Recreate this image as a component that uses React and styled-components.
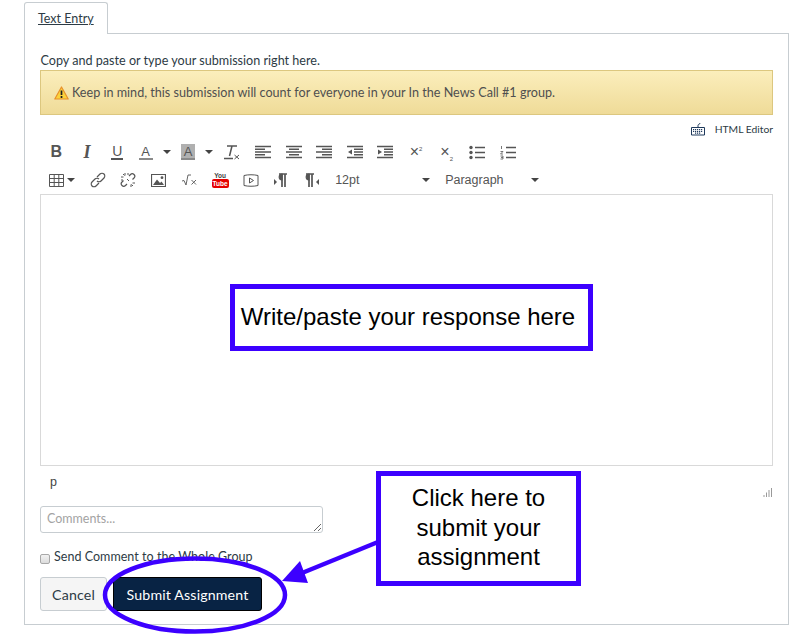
import React from 'react'
import styled, { createGlobalStyle } from 'styled-components'

const Global = createGlobalStyle`
  html, body { margin: 0; padding: 0; background: #fff; }
  body { font-family: Lato, "Liberation Sans", sans-serif; color: #2d3b45; font-size: 13px; }
`

const Page = styled.div`
  position: relative;
  width: 811px;
  height: 642px;
  overflow: hidden;
  padding: 2px 0 0 24px;
  box-sizing: border-box;
`

const Tab = styled.div`
  position: relative;
  z-index: 1;
  width: 84px;
  height: 32px;
  margin-bottom: -1px;
  box-sizing: border-box;
  padding: 7px 0 0 13px;
  background: #fff;
  border: 1px solid #c7cdd1;
  border-bottom: none;
  border-radius: 3px 3px 0 0;
  font-size: 12.5px;
  line-height: 17px;
  color: #2d3b45;
  span { text-decoration: underline; }
`

const Panel = styled.div`
  width: 765px;
  height: 592px;
  box-sizing: border-box;
  padding: 18px 15px 0;
  border: 1px solid #c7cdd1;
`

const Intro = styled.div`
  height: 18px;
  line-height: 17px;
  font-size: 12.6px;
  padding-left: 0.5px;
`

const Alert = styled.div`
  display: flex;
  align-items: center;
  gap: 3px;
  height: 45px;
  box-sizing: border-box;
  padding-left: 13px;
  background: linear-gradient(#fbeebc, #efdb98);
  border: 1px solid #dcc77f;
  color: #4f4f4f;
  font-size: 12.6px;
`

const EditorLink = styled.div`
  display: flex;
  justify-content: flex-end;
  align-items: center;
  gap: 9px;
  height: 18px;
  margin-top: 5px;
  font-size: 10.3px;
  color: #2d3b45;
`

const ToolRow = styled.div`
  display: flex;
  align-items: center;
  height: 28px;
  padding-left: 1px;
  color: #555;
`

const Tool = styled.span`
  display: flex;
  justify-content: center;
  align-items: center;
  flex: none;
  width: ${p => p.$w || 30.6}px;
  height: 24px;
`

const Letter = styled.span`
  font-family: ${p => (p.$serif ? '"Liberation Serif", serif' : '"Liberation Sans", sans-serif')};
  font-size: ${p => p.$size || 15}px;
  font-weight: ${p => (p.$bold ? 700 : 400)};
  font-style: ${p => (p.$italic ? 'italic' : 'normal')};
  line-height: 1;
  color: #555;
`

const Underlined = styled(Letter)`
  display: block;
  line-height: 12px;
  padding: 0 1px 1px;
  border-bottom: 2px solid #555;
`

const ColorLetter = styled.span`
  display: block;
  width: 14px;
  height: 16px;
  box-sizing: border-box;
  text-align: center;
  font-family: "Liberation Sans", sans-serif;
  font-size: 13px;
  line-height: 15px;
  color: #555;
  background: ${p => (p.$filled ? '#b0b0b0' : 'transparent')};
  border-bottom: 2px solid #8a8a8a;
`

const Script = styled.span`
  font-family: "Liberation Sans", sans-serif;
  font-size: 16px;
  color: #555;
  sup, sub { font-size: 6px; line-height: 0; }
`

const Caret = styled.i`
  display: block;
  flex: none;
  width: 0;
  height: 0;
  border-left: 4px solid transparent;
  border-right: 4px solid transparent;
  border-top: 4px solid #444;
`

const CaretSpace = styled.span`
  flex: none;
  width: ${p => p.$w}px;
`

const SelectLabel = styled.span`
  flex: none;
  width: ${p => p.$w}px;
  font-family: "Liberation Sans", sans-serif;
  font-size: 12.5px;
  color: #555;
`

const YouTube = styled.span`
  display: flex;
  flex-direction: column;
  align-items: center;
  font-family: "Liberation Sans", sans-serif;
  font-weight: 700;
  line-height: 1;
  b { font-size: 6.5px; line-height: 7px; color: #444; }
  em {
    font-style: normal;
    font-size: 6.5px;
    line-height: 9px;
    padding: 0 1px;
    color: #fff;
    background: #e60000;
    border-radius: 2px;
  }
`

const EditorBox = styled.div`
  height: 272px;
  box-sizing: border-box;
  border: 1px solid #d9d9d9;
`

const StatusBar = styled.div`
  display: flex;
  justify-content: space-between;
  height: 40px;
  padding-left: 10px;
  font-family: "Liberation Sans", sans-serif;
  font-size: 12.5px;
  line-height: 33px;
  color: #444;
  svg { margin-top: 22px; }
`

const Comments = styled.textarea`
  display: block;
  width: 283px;
  height: 27px;
  margin: 0;
  padding: 4px 6px;
  box-sizing: border-box;
  font-family: Lato, sans-serif;
  font-size: 12.5px;
  border: 1px solid #c7cdd1;
  border-radius: 3px;
  &::placeholder { color: #a3a3a3; opacity: 1; }
`

const CheckRow = styled.label`
  display: flex;
  align-items: flex-start;
  gap: 4px;
  height: 18px;
  margin-top: 14px;
  line-height: 20px;
  font-size: 12.5px;
  letter-spacing: 0.003em;
`

const Check = styled.input`
  appearance: none;
  width: 10px;
  height: 10px;
  margin: 7px 0 0;
  box-sizing: border-box;
  background: linear-gradient(#f2f2f2, #dcdcdc);
  border: 1px solid #a8a8a8;
  border-radius: 2px;
`

const Actions = styled.div`
  display: flex;
  gap: 6px;
  margin-top: 12px;
`

const Button = styled.button`
  height: 34px;
  width: ${p => p.$w}px;
  padding: 0;
  box-sizing: border-box;
  font-family: Lato, sans-serif;
  font-size: 14.2px;
  letter-spacing: 0.01em;
  border-radius: 3px;
  border: 1px solid ${p => (p.$primary ? '#000' : '#c7cdd1')};
  background: ${p => (p.$primary ? '#082344' : '#f5f5f5')};
  color: ${p => (p.$primary ? '#fff' : '#2d3b45')};
`

const Callout = styled.div`
  position: absolute;
  z-index: 3;
  left: ${p => p.$left}px;
  top: ${p => p.$top}px;
  width: ${p => p.$width}px;
  height: ${p => p.$height}px;
  box-sizing: border-box;
  padding: 0 ${p => p.$nudge || 0}px 2px 0;
  display: flex;
  align-items: center;
  justify-content: center;
  text-align: center;
  background: #fff;
  border: 5px solid #3c00ff;
  font-family: "Liberation Sans", sans-serif;
  font-size: 24px;
  line-height: 29.5px;
  color: #000;
`

const Markup = styled.svg`
  position: absolute;
  z-index: 2;
  left: 0;
  top: 0;
  pointer-events: none;
`

const Ic = ({ w = 16, h = 16, vb, children }) => (
  <svg width={w} height={h} viewBox={vb || `0 0 ${w} ${h}`} fill="none" stroke="#555" strokeWidth="1.2">
    {children}
  </svg>
)

const Lines = ({ rows }) => (
  <Ic w={16} h={14}>
    {rows.map(([x1, x2], i) => (
      <path key={i} d={`M${x1} ${1.5 + i * 2.75}H${x2}`} strokeWidth="1.5" />
    ))}
  </Ic>
)

const Indent = ({ flip }) => (
  <Ic w={16} h={14}>
    <path d="M0 1.5H16M0 12.5H16M7 4.25H16M7 7H16M7 9.75H16" strokeWidth="1.5" />
    <path d={flip ? 'M1 4.5L5 7L1 9.5Z' : 'M5 4.5L1 7L5 9.5Z'} fill="#555" stroke="none" />
  </Ic>
)

const List = ({ numbered }) => (
  <Ic w={16} h={15}>
    <path d="M6 2.5H16M6 7.5H16M6 12.5H16" strokeWidth="1.6" />
    {numbered
      ? <path d="M1.5 1V4M.5 6.5H3L.5 9H3M.5 11H3V14H.5M1 12.5H3" strokeWidth=".8" />
      : <g fill="#555" stroke="none"><circle cx="2" cy="2.5" r="1.7" /><circle cx="2" cy="7.5" r="1.7" /><circle cx="2" cy="12.5" r="1.7" /></g>}
  </Ic>
)

const Pilcrow = ({ left }) => (
  <Ic w={14} h={16}>
    {left
      ? <>
          <path d="M5 2H13M8 2V15M11 2V15" strokeWidth="1.7" />
          <path d="M8 2.2C4.5 2.2 4 8 8 8Z" fill="#555" />
          <path d="M0 7L3 10L0 13Z" fill="#555" stroke="none" />
        </>
      : <>
          <path d="M1 2H9M4 2V15M7 2V15" strokeWidth="1.7" />
          <path d="M4 2.2C.5 2.2 0 8 4 8Z" fill="#555" />
          <path d="M14 7L11 10L14 13Z" fill="#555" stroke="none" />
        </>}
  </Ic>
)

export default function App() {
  return (
    <Page>
      <Global />
      <Tab><span>Text Entry</span></Tab>
      <Panel>
        <Intro>Copy and paste or type your submission right here.</Intro>
        <Alert>
          <svg width="15" height="14" viewBox="0 0 15 14">
            <path d="M7.5 1L14.2 13H.8Z" fill="#fbd33c" stroke="#e8902a" strokeWidth="1.2" strokeLinejoin="round" />
            <path d="M7.5 4.5V9M7.5 10V12" stroke="#222" strokeWidth="1.7" />
          </svg>
          Keep in mind, this submission will count for everyone in your In the News Call #1 group.
        </Alert>
        <EditorLink>
          <svg width="16" height="14" viewBox="0 0 16 14" fill="none" stroke="#1f3a5c" strokeWidth="1">
            <path d="M1.5 5.5H14.5V13H1.5ZM8 5.5V3.5C8 2 10 2.5 10 1" />
            <path d="M3 7.5H13M3 9.3H13M5 11.2H11" strokeDasharray="1.2 .8" strokeWidth="1.2" />
          </svg>
          HTML Editor
        </EditorLink>

        <ToolRow>
          <Tool><Letter $bold $size={16}>B</Letter></Tool>
          <Tool><Letter $italic $bold $serif $size={18}>I</Letter></Tool>
          <Tool $w={30}><Underlined $size={14}>U</Underlined></Tool>
          <Tool $w={27}><ColorLetter>A</ColorLetter></Tool>
          <Tool $w={16}><Caret /></Tool>
          <Tool $w={26}><ColorLetter $filled>A</ColorLetter></Tool>
          <Tool $w={16}><Caret /></Tool>
          <Tool>
            <Ic w={16} h={16}>
              <path d="M3 2H13M8 2L5.5 12M0 14.5H9" strokeWidth="1.5" />
              <path d="M10.5 11L15 15M15 11L10.5 15" strokeWidth="1" />
            </Ic>
          </Tool>
          <Tool><Lines rows={[[0, 16], [0, 10], [0, 16], [0, 10], [0, 16]]} /></Tool>
          <Tool><Lines rows={[[0, 16], [3, 13], [0, 16], [3, 13], [0, 16]]} /></Tool>
          <Tool><Lines rows={[[0, 16], [6, 16], [0, 16], [6, 16], [0, 16]]} /></Tool>
          <Tool><Indent /></Tool>
          <Tool><Indent flip /></Tool>
          <Tool><Script>×<sup>2</sup></Script></Tool>
          <Tool><Script>×<sub>2</sub></Script></Tool>
          <Tool><List /></Tool>
          <Tool><List numbered /></Tool>
        </ToolRow>

        <ToolRow>
          <Tool $w={42}>
            <Ic w={15} h={13} vb="0 0 15 13">
              <path d="M.5.5H14.5V12.5H.5ZM.5 4.5H14.5M.5 8.5H14.5M5.2.5V12.5M9.8.5V12.5" strokeWidth="1" />
            </Ic>
            <CaretSpace $w={3} />
            <Caret />
          </Tool>
          <Tool $w={30}>
            <Ic w={16} h={16}>
              <path d="M7 5L10 2C11 1 13 1 14 2C15 3 15 5 14 6L11 9C10 10 8 10 7 9M9 11L6 14C5 15 3 15 2 14C1 13 1 11 2 10L5 7C6 6 8 6 9 7" />
            </Ic>
          </Tool>
          <Tool>
            <Ic w={16} h={16}>
              <path d="M9 4L10.5 2.5C11.5 1.5 13 1.5 14 2.5C15 3.5 15 5 14 6L12.5 7.5M7 12L5.5 13.5C4.5 14.5 3 14.5 2 13.5C1 12.5 1 11 2 10L3.5 8.5" />
              <path d="M5 1V3.5M1 5H3.5M11 15V12.5M15 11H12.5M8 1V3M1 8H3M3 2L4.5 3.5M13 14L11.5 12.5M7 7L9 9" strokeWidth="1" />
            </Ic>
          </Tool>
          <Tool>
            <Ic w={15} h={13} vb="0 0 15 13">
              <path d="M.5.5H14.5V12.5H.5Z" />
              <path d="M2 11L6 5.5L9 9L10.5 7.5L13 11Z" fill="#555" stroke="none" />
              <circle cx="11" cy="3.7" r="1.4" fill="#555" stroke="none" />
            </Ic>
          </Tool>
          <Tool>
            <Ic w={15} h={12} vb="0 0 15 12">
              <path d="M0 7L2 6.5L4 11L6 1H9" strokeWidth=".9" />
              <path d="M9.5 6L14 10.5M14 6L9.5 10.5" strokeWidth=".9" />
            </Ic>
          </Tool>
          <Tool><YouTube><b>You</b><em>Tube</em></YouTube></Tool>
          <Tool>
            <Ic w={16} h={13} vb="0 0 16 13">
              <path d="M1 1.5C5 .5 11 .5 15 1.5V11.5C11 12.5 5 12.5 1 11.5Z" strokeWidth="1" />
              <path d="M6.5 4L10.5 6.5L6.5 9Z" strokeWidth="1" />
            </Ic>
          </Tool>
          <Tool><Pilcrow left /></Tool>
          <Tool><Pilcrow /></Tool>
          <CaretSpace $w={8} />
          <SelectLabel $w={87}>12pt</SelectLabel>
          <Caret />
          <CaretSpace $w={15} />
          <SelectLabel $w={86}>Paragraph</SelectLabel>
          <Caret />
        </ToolRow>

        <EditorBox />
        <StatusBar>
          p
          <svg width="11" height="9" viewBox="0 0 11 9" fill="#999">
            <path d="M9 0H10V9H9ZM6.5 2H7.5V9H6.5ZM4 4.5H5V9H4ZM1.5 7H2.5V9H1.5Z" />
          </svg>
        </StatusBar>
        <Comments placeholder="Comments..." />
        <CheckRow>
          <Check type="checkbox" />
          Send Comment to the Whole Group
        </CheckRow>
        <Actions>
          <Button $w={67}>Cancel</Button>
          <Button $w={149} $primary>Submit Assignment</Button>
        </Actions>
      </Panel>

      <Markup width="811" height="642" viewBox="0 0 811 642">
        <ellipse cx="195" cy="595" rx="90" ry="36.5" fill="none" stroke="#3c00ff" strokeWidth="4.5" />
        <path d="M378 542L302 573" stroke="#3c00ff" strokeWidth="4.5" />
        <path d="M282 581L300 561L308 583Z" fill="#3c00ff" />
      </Markup>
      <Callout $left={230} $top={284} $width={363} $height={67} $nudge={7}>Write/paste your response here</Callout>
      <Callout $left={376} $top={471} $width={205} $height={115}>Click here to<br />submit your<br />assignment</Callout>
    </Page>
  )
}
